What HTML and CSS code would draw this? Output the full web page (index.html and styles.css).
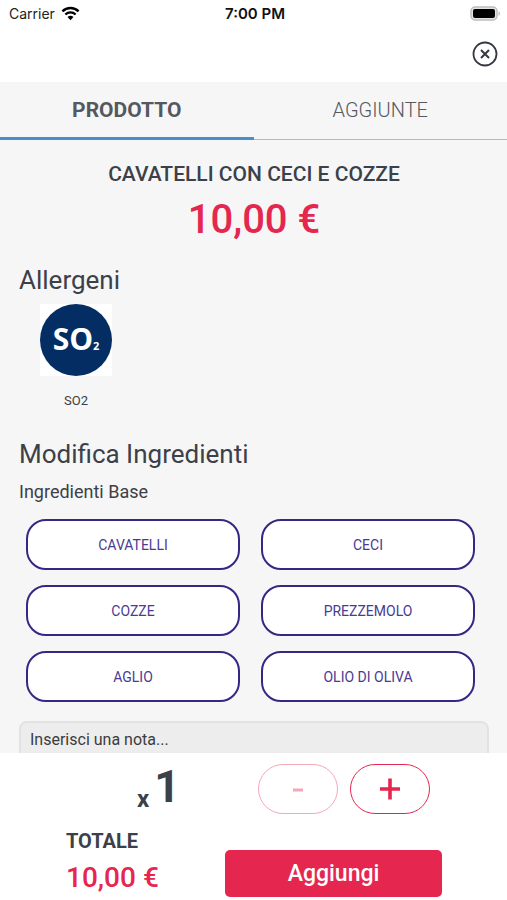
FILE: index.html
```html
<!DOCTYPE html>
<html lang="it">
<head>
  <meta charset="UTF-8">
  <meta name="viewport" content="width=device-width, initial-scale=1.0">
  <title>Prodotto</title>
  <link rel="stylesheet" href="styles.css">
</head>
<body>
<div class="app">
  <div class="status-bar">
    <div class="carrier">
      <span>Carrier</span>
      <svg class="wifi" viewBox="0 0 20 15">
        <path d="M1.5 5.2a12.2 12.2 0 0 1 17 0" fill="none" stroke="#000" stroke-width="2.6"/>
        <path d="M4.6 8.6a7.8 7.8 0 0 1 10.8 0" fill="none" stroke="#000" stroke-width="2.4"/>
        <path d="M10 14.5 6.9 11.3a4.5 4.5 0 0 1 6.2 0z"/>
      </svg>
    </div>
    <div class="clock">7:00 PM</div>
    <div class="power">
      <svg class="battery" viewBox="0 0 31 15">
        <rect x="1" y="1" width="26" height="13" rx="4" fill="#e4e4e4" stroke="#bdbdbd" stroke-width="1.5"/>
        <rect x="3" y="3" width="22" height="9" rx="2"/>
        <path d="M28.5 5.2c2 .8 2 3.800 0 4.600z" fill="#bdbdbd"/>
      </svg>
    </div>
  </div>

  <header class="header">
    <button class="close" type="button" aria-label="Chiudi">
      <svg viewBox="0 0 26 26" fill="none" stroke="#343843">
        <circle cx="13" cy="13" r="11.500" stroke-width="1.800"/>
        <path d="M9 9l8 8M17 9l-8 8" stroke-width="2"/>
      </svg>
    </button>
  </header>

  <nav class="tabs">
    <button class="tab active" type="button">PRODOTTO</button>
    <button class="tab" type="button">AGGIUNTE</button>
  </nav>

  <main class="content">
    <h1 class="name">CAVATELLI CON CECI E COZZE</h1>
    <p class="price">10,00 €</p>

    <h2 class="title">Allergeni</h2>
    <div class="allergen">
      <div class="allergen-icon">
        <div class="circle">SO<span class="sub">2</span></div>
      </div>
      <span class="allergen-name">SO2</span>
    </div>

    <h2 class="title">Modifica Ingredienti</h2>
    <h3 class="subtitle">Ingredienti Base</h3>
    <div class="ingredients">
      <button class="ingredient" type="button">CAVATELLI</button>
      <button class="ingredient" type="button">CECI</button>
      <button class="ingredient" type="button">COZZE</button>
      <button class="ingredient" type="button">PREZZEMOLO</button>
      <button class="ingredient" type="button">AGLIO</button>
      <button class="ingredient" type="button">OLIO DI OLIVA</button>
    </div>

    <textarea class="note" aria-label="Nota" placeholder="Inserisci una nota..."></textarea>
  </main>

  <footer class="footer">
    <div class="row">
      <div class="quantity"><span class="times">x</span><span class="count">1</span></div>
      <div class="stepper">
        <button class="step" type="button" aria-label="Meno" disabled>
          <svg viewBox="0 0 20 22"><path d="M5 12h10" stroke="currentColor" stroke-width="3"/></svg>
        </button>
        <button class="step" type="button" aria-label="Più">
          <svg viewBox="0 0 20 22"><path d="M0 11h20M10 0.500v21" stroke="currentColor" stroke-width="3.600"/></svg>
        </button>
      </div>
    </div>
    <div class="row">
      <div class="total">
        <span class="total-label">TOTALE</span>
        <span class="total-price">10,00 €</span>
      </div>
      <button class="add" type="button">Aggiungi</button>
    </div>
  </footer>
</div>
</body>
</html>
```

FILE: styles.css
```css
* {
  box-sizing: border-box;
}
body {
  margin: 0;
  font-family: Roboto, "Liberation Sans", sans-serif;
  color: #3c4048;
  background-color: #fff;
}
button {
  font-family: inherit;
  padding: 0;
  cursor: pointer;
}
h1, h2, h3, p {
  margin: 0;
}

.app {
  display: flex;
  flex-direction: column;
  height: 100vh;
}

.status-bar {
  display: grid;
  grid-template-columns: 1fr auto 1fr;
  align-items: center;
  height: 26px;
  padding: 0 6px 0 9px;
  font-family: Inter, Roboto, sans-serif;
  font-size: 14px;
  color: #222;
}
.carrier {
  display: flex;
  align-items: center;
  gap: 6px;
}
.wifi {
  width: 19px;
  height: 15px;
}
.clock {
  font-size: 15px;
  font-weight: 600;
  color: #111;
}
.power {
  display: flex;
  justify-content: flex-end;
}
.battery {
  width: 31px;
  height: 15px;
}

.header {
  display: flex;
  justify-content: flex-end;
  align-items: center;
  height: 56px;
  padding: 0 9px;
}
.close {
  width: 26px;
  height: 26px;
  border: none;
  background: none;
}
.close svg {
  display: block;
}

.tabs {
  display: flex;
  flex-shrink: 0;
  height: 58px;
  background-color: #f6f6f6;
}
.tab {
  flex: 1;
  padding-bottom: 2px;
  border: none;
  border-bottom: 1px solid #b8b8b8;
  background: none;
  font-size: 20px;
  font-weight: 300;
  color: #55585e;
}
.tab.active {
  padding-bottom: 0;
  border-bottom: 3px solid #458fd0;
  font-size: 21px;
  font-weight: 700;
}

.content {
  flex: 1;
  min-height: 0;
  overflow-y: auto;
  scrollbar-width: none;
  padding: 20px 18px 20px 19px;
  background-color: #f6f6f6;
}
.name {
  font-size: 21px;
  line-height: 28px;
  font-weight: 500;
  text-align: center;
}
.price {
  margin-bottom: 12px;
  font-size: 40px;
  line-height: 64px;
  font-weight: 500;
  text-align: center;
  color: #e5264f;
}
.title {
  font-size: 26px;
  line-height: 32px;
  font-weight: 400;
}
.allergen {
  display: flex;
  flex-direction: column;
  align-items: center;
  gap: 16px;
  width: 114px;
  margin: 8px 0 28px;
}
.allergen-icon {
  width: 72px;
  height: 72px;
  background-color: #fff;
}
.circle {
  height: 100%;
  border-radius: 50%;
  background-color: #032d63;
  font-family: "Open Sans", "Noto Sans", sans-serif;
  font-size: 30px;
  line-height: 70px;
  font-weight: 700;
  text-align: center;
  color: #fff;
}
.sub {
  font-size: 11px;
}
.allergen-name {
  font-size: 13px;
  line-height: 18px;
}
.subtitle {
  margin: 10px 0 15px;
  font-size: 18px;
  line-height: 24px;
  font-weight: 400;
}
.ingredients {
  display: grid;
  grid-template-columns: 1fr 1fr;
  gap: 15px 21px;
  padding: 0 14px 0 7px;
  margin-bottom: 19px;
}
.ingredient {
  height: 51px;
  border: 2px solid #352784;
  border-radius: 20px;
  background-color: #fff;
  font-size: 14px;
  color: #4a3b92;
}
.note {
  display: block;
  width: 100%;
  height: 110px;
  padding: 7px 9px;
  border: 2px solid #e2e2e2;
  border-radius: 8px;
  background-color: #ededed;
  font-family: inherit;
  font-size: 16px;
  resize: none;
}
.note::placeholder {
  color: #3c3c3c;
}

.footer {
  display: flex;
  flex-direction: column;
  gap: 9px;
  padding: 11px 65px 3px 66px;
}
.row {
  display: flex;
  justify-content: space-between;
  align-items: flex-end;
}
.quantity {
  display: flex;
  flex: 1;
  justify-content: flex-end;
  gap: 5px;
  padding-right: 78px;
  font-weight: 700;
}
.times {
  align-self: flex-end;
  font-size: 24px;
  line-height: 30px;
}
.count {
  font-size: 45px;
  line-height: 46px;
}
.stepper {
  display: flex;
  gap: 12px;
  padding-right: 12px;
}
.quantity,
.stepper {
  height: 50px;
}
.step {
  display: flex;
  justify-content: center;
  align-items: center;
  width: 80px;
  height: 50px;
  border: 1px solid #e5264f;
  border-radius: 25px;
  background-color: #fff;
  color: #e5264f;
}
.step svg {
  width: 20px;
  height: 22px;
}
.step:disabled {
  opacity: 0.4;
}
.total {
  display: flex;
  flex-direction: column;
}
.total-label {
  font-size: 20px;
  line-height: 36px;
  font-weight: 700;
}
.total-price {
  font-size: 28px;
  line-height: 38px;
  font-weight: 500;
  color: #e5264f;
}
.add {
  width: 217px;
  height: 47px;
  border: none;
  border-radius: 5px;
  background-color: #e5264f;
  font-size: 23px;
  font-weight: 500;
  color: #fff;
}
```
